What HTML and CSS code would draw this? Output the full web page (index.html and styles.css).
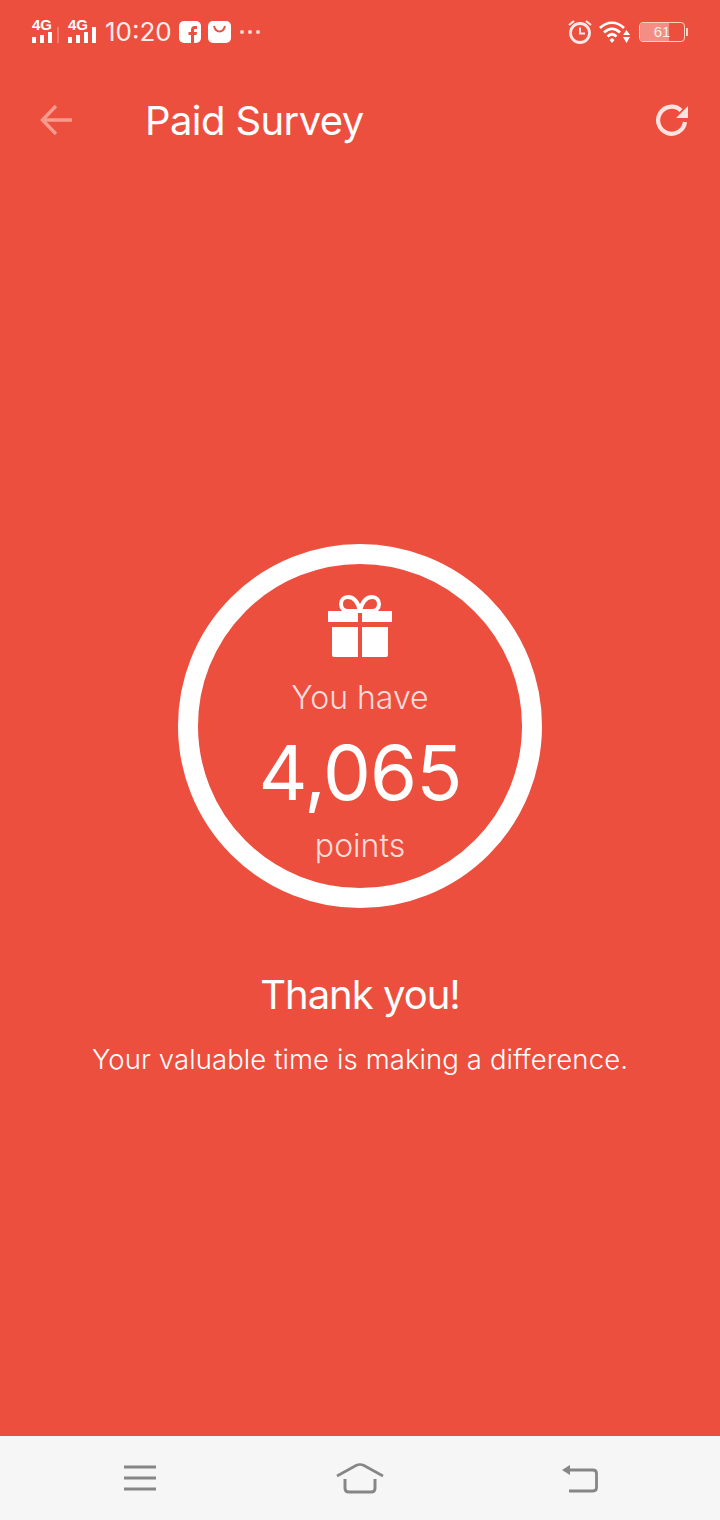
FILE: index.html
```html
<!DOCTYPE html>
<html lang="en">
<head>
  <meta charset="UTF-8" />
  <title>Paid Survey</title>
  <meta name="viewport" content="width=device-width, initial-scale=1.0"/>
  <link rel="stylesheet" href="styles.css">
</head>
<body>

<div class="status-bar">
  <div class="status-left">
    <div class="signal">
      <span class="signal-label">4G</span>
      <svg width="28" height="16" viewBox="0 0 28 16"><path d="M0 10h4v6H0zM8 8h4v8H8zM16 5h4v11h-4z" fill="#fff"/><path d="M25 0h2v16h-2z" fill="#fff" opacity=".25"/></svg>
    </div>
    <div class="signal signal-full">
      <span class="signal-label">4G</span>
      <svg width="29" height="16" viewBox="0 0 29 16"><path d="M0 10h4v6H0zM8 8h4v8H8zM16 5h4v11h-4zM24 0h4v16h-4z" fill="#fff"/></svg>
    </div>
    <span class="clock">10:20</span>
    <svg class="notif" width="22" height="22" viewBox="0 0 22 22"><rect width="22" height="22" rx="5" fill="#fff"/><path d="M12 22v-8H9.500v-3H12V8.700C12 6.400 13.400 5 15.500 5H18v3h-1.700c-.9 0-1.300.5-1.300 1.200V11h3l-.5 3H15v8z" fill="#ed4f3f"/></svg>
    <svg class="notif" width="23" height="22" viewBox="0 0 23 22"><rect width="23" height="22" rx="5" fill="#fff"/><path d="M6 5c1 4 3 5.500 5.500 5.500S16 9 17 5" fill="none" stroke="#ed4f3f" stroke-width="2"/></svg>
    <div class="dots"><i></i><i></i><i></i></div>
  </div>
  <div class="status-right">
    <svg width="26" height="26" viewBox="0 0 26 26"><circle cx="13" cy="14" r="9.500" fill="none" stroke="#fde9e6" stroke-width="2.800"/><path d="M13 8.500V14.500H18" fill="none" stroke="#fde9e6" stroke-width="2"/><path d="M2 6l5-4M24 6l-5-4" stroke="#fde9e6" stroke-width="2.200"/></svg>
    <svg width="32" height="22" viewBox="0 0 32 22"><path d="M1 7c7-7 17-7 24 0M5 11.500c5-5 11-5 16 0M8.500 15.500c3-3 6-3 9 0" fill="none" stroke="#fff" stroke-width="2.600"/><path d="M10.500 19l2.500-2 2.500 2-2.500 3z" fill="#fff"/><path d="M27.500 9l3.500 5h-7zM27.500 22l3.500-6h-7z" fill="#fff"/></svg>
    <div class="battery">
      <div class="battery-body">
        <div class="battery-fill"></div>
        <span class="battery-text">61</span>
      </div>
      <div class="battery-tip"></div>
    </div>
  </div>
</div>

<header class="app-bar">
  <svg class="back" width="32" height="32" viewBox="0 0 32 32"><path d="M16 2L2.500 16 16 30M3 16h29" fill="none" stroke="#f99a8e" stroke-width="3.400"/></svg>
  <h1 class="title">Paid Survey</h1>
  <svg class="refresh" width="34" height="34" viewBox="0 0 34 34"><path d="M26 7.500A13.500 13.500 0 1 0 30 19" fill="none" stroke="#fde3df" stroke-width="4.200"/><path d="M33 3v12H21z" fill="#fde3df"/></svg>
</header>

<main class="content">
  <div class="ring">
    <svg class="gift" width="64" height="64" viewBox="0 0 64 64">
      <path d="M32 17C30 8 26 3 20 3c-4 0-7 3-7 7s3 7 7 7zM32 17C34 8 38 3 44 3c4 0 7 3 7 7s-3 7-7 7z" fill="none" stroke="#fff" stroke-width="4"/>
      <path d="M0 17h30v11H0zM34 17h30v11H34zM4 33h26v30H6a2 2 0 0 1-2-2zM34 33h26v28a2 2 0 0 1-2 2H34z" fill="#fff"/>
    </svg>
    <div class="ring-label">You have</div>
    <div class="ring-points">4,065</div>
    <div class="ring-label points">points</div>
  </div>
  <h2 class="thanks">Thank you!</h2>
  <p class="message">Your valuable time is making a difference.</p>
</main>

<nav class="nav-bar">
  <svg width="36" height="30" viewBox="0 0 36 30"><path d="M2 4h32M2 15h32M2 26h32" stroke="#868686" stroke-width="3"/></svg>
  <svg width="50" height="34" viewBox="0 0 50 34"><path d="M2 15L21 4.500c2.500-1.300 5.500-1.300 8 0L48 15" fill="none" stroke="#868686" stroke-width="2.600"/><path d="M10 18v9c0 2.500 1.500 4 4 4h22c2.500 0 4-1.500 4-4v-9" fill="none" stroke="#868686" stroke-width="3"/></svg>
  <svg width="36" height="30" viewBox="0 0 36 30"><path d="M6 7h25c2 0 3.500 1.200 3.500 3.500v14c0 2.300-1.500 3.500-3.500 3.500H7" fill="none" stroke="#868686" stroke-width="2.800"/><path d="M0 7l8-5v10z" fill="#868686"/></svg>
</nav>

</body>
</html>
```

FILE: styles.css
```css
html, body {
  margin: 0;
  height: 100%;
}
body {
  width: 720px;
  height: 1520px;
  display: flex;
  flex-direction: column;
  background-color: #ed4f3f;
  color: #fff;
  font-family: Inter, "Liberation Sans", sans-serif;
  overflow: hidden;
}

/* status bar */
.status-bar {
  height: 64px;
  display: flex;
  justify-content: space-between;
  align-items: center;
  padding: 0 32px;
  box-sizing: border-box;
}
.status-left, .status-right {
  display: flex;
  align-items: center;
}
.signal {
  display: flex;
  flex-direction: column;
  align-items: flex-start;
  margin-right: 8px;
  margin-bottom: 3px;
  width: 28px;
}
.signal-full {
  width: 29px;
}
.signal svg {
  margin-top: -5px;
}
.signal-label {
  font-size: 15px;
  line-height: 14px;
  font-weight: 700;
  font-family: "Liberation Sans", sans-serif;
}
.clock {
  font-size: 26px;
  line-height: 30px;
  margin-right: 7px;
  color: #fdeeec;
}
.notif {
  margin-right: 7px;
}
.dots {
  display: flex;
  gap: 4px;
  margin-left: 2px;
}
.dots i {
  width: 4px;
  height: 4px;
  border-radius: 50%;
  background: #fbd9d4;
}
.status-right {
  gap: 6px;
}
.battery {
  display: flex;
  align-items: center;
  margin-left: 2px;
}
.battery-body {
  position: relative;
  width: 46px;
  height: 20px;
  border: 1.500px solid #fbd3c0;
  border-radius: 4px;
  box-sizing: border-box;
  overflow: hidden;
  text-align: center;
}
.battery-fill {
  position: absolute;
  left: 0;
  top: 0;
  bottom: 0;
  width: 66%;
  background: #f48d83;
}
.battery-text {
  position: relative;
  font-size: 15px;
  line-height: 17px;
  display: block;
  font-family: "Liberation Sans", sans-serif;
  color: #fdeeec;
}
.battery-tip {
  width: 2px;
  height: 8px;
  background: #fbd3c0;
  margin-left: 1px;
}

/* app bar */
.app-bar {
  height: 104px;
  display: flex;
  align-items: center;
  padding: 8px 31px 0 40px;
  box-sizing: border-box;
}
.back {
  margin-right: 73px;
}
.title {
  flex: 1;
  margin: 0;
  font-size: 40px;
  font-weight: 400;
  letter-spacing: -0.6px;
  color: #fff;
}

/* main */
.content {
  flex: 1;
  display: flex;
  flex-direction: column;
  align-items: center;
  padding-top: 376px;
}
.ring {
  width: 364px;
  height: 364px;
  border: 20px solid #fff;
  border-radius: 50%;
  box-sizing: border-box;
  display: flex;
  flex-direction: column;
  align-items: center;
  padding-top: 30px;
}
.gift {
  display: block;
}
.ring-label {
  font-size: 32px;
  font-weight: 300;
  line-height: 38px;
  margin-top: 21px;
  color: #fcdcd8;
}
.ring-points {
  font-size: 76px;
  font-weight: 400;
  line-height: 86px;
  margin-top: 12px;
  letter-spacing: -1px;
}
.ring-label.points {
  margin-top: 12px;
}
.thanks {
  margin: 62px 0 0;
  font-size: 40px;
  line-height: 50px;
  font-weight: 400;
  letter-spacing: -1px;
}
.message {
  margin: 22px 0 0;
  font-size: 27.500px;
  line-height: 34px;
  font-weight: 300;
  letter-spacing: 0.1px;
}

/* nav bar */
.nav-bar {
  height: 84px;
  background: #f6f6f6;
  display: flex;
  justify-content: space-between;
  align-items: center;
  padding: 0 122px;
  box-sizing: border-box;
}
```
